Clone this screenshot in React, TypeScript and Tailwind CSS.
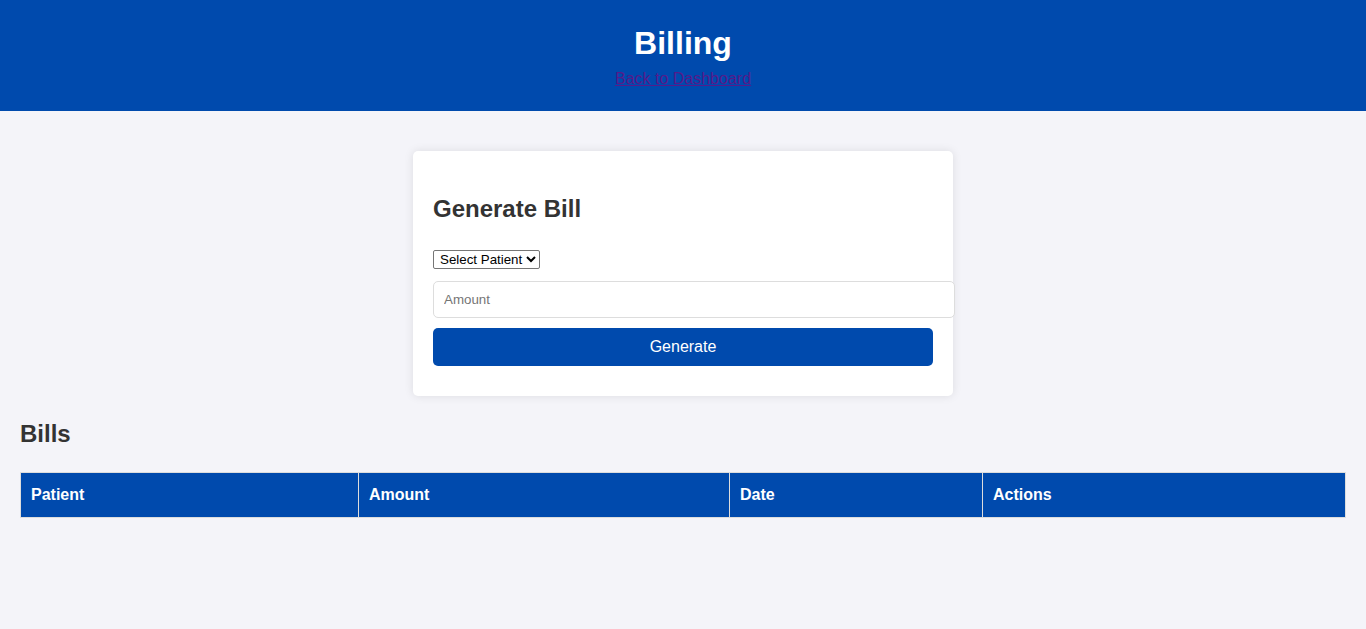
export default function App() {
  const columns = [
    { label: "Patient", width: "w-[338px]" },
    { label: "Amount", width: "w-[371px]" },
    { label: "Date", width: "w-[253px]" },
    { label: "Actions", width: "w-[363px]" },
  ];

  return (
    <div className="min-h-[629px] bg-[#f4f4f9] font-['Liberation_Sans',Arial,sans-serif] text-[#333]">
      <header className="bg-[#004aad] pt-[25px] pb-[23px] text-center text-white">
        <h1 className="text-[32px] font-bold leading-[37px]">Billing</h1>
        <p className="mt-[8px] text-[16px] leading-[18px]">
          <a href="#" className="text-[#551a8b] underline">
            Back to Dashboard
          </a>
        </p>
      </header>

      <main className="px-[20px] pt-[40px]">
        <div className="mx-auto w-[540px] rounded-[5px] bg-white px-[20px] pt-[44px] pb-[30px] shadow-[0_0_10px_rgba(0,0,0,0.1)]">
          <h2 className="text-[24px] font-bold leading-[28px]">Generate Bill</h2>
          <form className="mt-[27px]" onSubmit={(e) => e.preventDefault()}>
            <select className="block h-[19px] w-[107px] rounded-[2px] border border-[#767676] bg-white pl-[2px] pr-0 text-[13.33px] leading-[15px] text-black">
              <option>Select Patient</option>
            </select>
            <input
              type="text"
              placeholder="Amount"
              className="mt-[12px] box-content block h-[15px] w-[500px] rounded-[5px] border border-[#ddd] bg-white p-[10px] text-[13.33px] leading-[15px] outline-none placeholder:text-[#757575]"
            />
            <button
              type="submit"
              className="mt-[10px] block h-[38px] w-[500px] rounded-[5px] bg-[#004aad] text-[16px] text-white"
            >
              Generate
            </button>
          </form>
        </div>

        <h2 className="mt-[24px] text-[24px] font-bold leading-[28px]">Bills</h2>
        <table className="mt-[24px] w-[1325px] table-fixed border-collapse">
          <thead>
            <tr className="bg-[#004aad] text-white">
              {columns.map((c) => (
                <th
                  key={c.label}
                  className={`${c.width} h-[45px] border border-[#ddd] px-[10px] text-left text-[16px] font-bold`}
                >
                  {c.label}
                </th>
              ))}
            </tr>
          </thead>
          <tbody />
        </table>
      </main>
    </div>
  );
}
